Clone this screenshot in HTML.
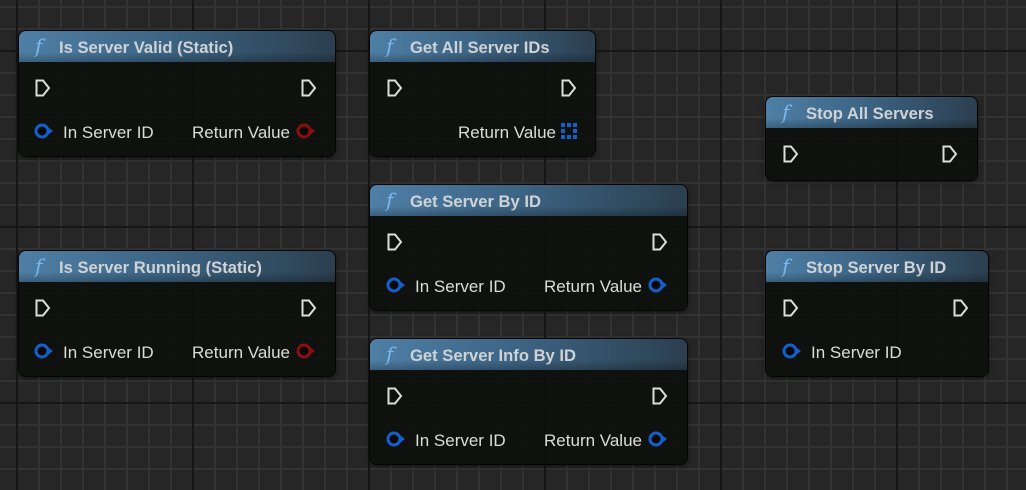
<!DOCTYPE html>
<html><head><meta charset="utf-8"><style>
html,body{margin:0;padding:0;}
body{width:1026px;height:490px;overflow:hidden;position:relative;font-family:"Liberation Sans",sans-serif;
background-color:#262626;
background-image:
linear-gradient(to right,#161616 2px,transparent 2px),
linear-gradient(to bottom,#161616 2px,transparent 2px),
linear-gradient(to right,#333 2px,transparent 2px),
linear-gradient(to bottom,#333 2px,transparent 2px);
background-size:176px 176px,176px 176px,22px 22px,22px 22px;
background-position:16px 0,0 50px,16px 0,0 6px;}
.n{position:absolute;border-radius:7px;background:rgba(14,16,14,0.93);box-shadow:0 0 0 1px #050505,0 2px 6px rgba(0,0,0,.6);overflow:hidden;}
.h{height:31px;background:linear-gradient(to right,#4f7fa6 0%,#3d6585 45%,#2b3f4f 100%);position:relative;}
.h:after{content:"";position:absolute;left:0;right:0;bottom:0;height:10px;background:linear-gradient(to bottom,rgba(0,0,0,0),rgba(0,0,0,.25));}
.f{position:absolute;left:16px;top:3px;color:#7ab8ee;font-family:"DejaVu Serif",serif;font-style:italic;font-size:20px;}
.t{position:absolute;left:40px;top:7px;color:#cfd3d6;font-weight:bold;font-size:16.6px;white-space:nowrap;}
.p{position:absolute;}
.tx{position:absolute;color:#dcdcdc;font-size:17px;white-space:nowrap;}
</style></head><body>

<!-- Is Server Valid -->
<div class="n" style="left:19px;top:31px;width:316px;height:125px;">
<div class="h"><span class="f">f</span><span class="t">Is Server Valid (Static)</span></div>
<svg class="p" style="left:16px;top:48px" width="16" height="18"><path d="M1.5 1.5H8L14 9L8 16.5H1.5Z" fill="none" stroke="#ddd" stroke-width="2"/></svg>
<svg class="p" style="left:282px;top:48px" width="16" height="18"><path d="M1.5 1.5H8L14 9L8 16.5H1.5Z" fill="none" stroke="#ddd" stroke-width="2"/></svg>
<svg class="p" style="left:15px;top:92px" width="20" height="16"><circle cx="8" cy="8" r="6" fill="#080808" stroke="#1160cc" stroke-width="3"/><path d="M15 5L19 8L15 11Z" fill="#1160cc"/></svg>
<span class="tx" style="left:44px;top:92px">In Server ID</span>
<span class="tx" style="right:45px;top:92px">Return Value</span>
<svg class="p" style="left:277px;top:92px" width="20" height="16"><circle cx="8" cy="8" r="6" fill="#080808" stroke="#8a0f0f" stroke-width="3"/><path d="M15 5L19 8L15 11Z" fill="#8a0f0f"/></svg>
</div>

<!-- Get All Server IDs -->
<div class="n" style="left:370px;top:31px;width:225px;height:125px;">
<div class="h"><span class="f">f</span><span class="t">Get All Server IDs</span></div>
<svg class="p" style="left:17px;top:48px" width="16" height="18"><path d="M1.5 1.5H8L14 9L8 16.5H1.5Z" fill="none" stroke="#ddd" stroke-width="2"/></svg>
<svg class="p" style="left:191px;top:48px" width="16" height="18"><path d="M1.5 1.5H8L14 9L8 16.5H1.5Z" fill="none" stroke="#ddd" stroke-width="2"/></svg>
<span class="tx" style="right:39px;top:92px">Return Value</span>
<svg class="p" style="left:191px;top:92px" width="17" height="16"><g fill="#1160cc"><rect x="0" y="0" width="4" height="4"/><rect x="6" y="0" width="4" height="4"/><rect x="12" y="0" width="4" height="4"/><rect x="0" y="6" width="4" height="4"/><rect x="12" y="6" width="4" height="4"/><rect x="0" y="12" width="4" height="4"/><rect x="6" y="12" width="4" height="4"/><rect x="12" y="12" width="4" height="4"/></g></svg>
</div>

<!-- Stop All Servers -->
<div class="n" style="left:766px;top:97px;width:211px;height:83px;">
<div class="h"><span class="f">f</span><span class="t">Stop All Servers</span></div>
<svg class="p" style="left:17px;top:48px" width="16" height="18"><path d="M1.5 1.5H8L14 9L8 16.5H1.5Z" fill="none" stroke="#ddd" stroke-width="2"/></svg>
<svg class="p" style="left:176px;top:48px" width="16" height="18"><path d="M1.5 1.5H8L14 9L8 16.5H1.5Z" fill="none" stroke="#ddd" stroke-width="2"/></svg>
</div>

<!-- Get Server By ID -->
<div class="n" style="left:370px;top:185px;width:317px;height:125px;">
<div class="h"><span class="f">f</span><span class="t">Get Server By ID</span></div>
<svg class="p" style="left:17px;top:48px" width="16" height="18"><path d="M1.5 1.5H8L14 9L8 16.5H1.5Z" fill="none" stroke="#ddd" stroke-width="2"/></svg>
<svg class="p" style="left:282px;top:48px" width="16" height="18"><path d="M1.5 1.5H8L14 9L8 16.5H1.5Z" fill="none" stroke="#ddd" stroke-width="2"/></svg>
<svg class="p" style="left:16px;top:92px" width="20" height="16"><circle cx="8" cy="8" r="6" fill="#080808" stroke="#1160cc" stroke-width="3"/><path d="M15 5L19 8L15 11Z" fill="#1160cc"/></svg>
<span class="tx" style="left:45px;top:92px">In Server ID</span>
<span class="tx" style="right:45px;top:92px">Return Value</span>
<svg class="p" style="left:278px;top:92px" width="20" height="16"><circle cx="8" cy="8" r="6" fill="#080808" stroke="#1160cc" stroke-width="3"/><path d="M15 5L19 8L15 11Z" fill="#1160cc"/></svg>
</div>

<!-- Is Server Running -->
<div class="n" style="left:19px;top:251px;width:316px;height:125px;">
<div class="h"><span class="f">f</span><span class="t">Is Server Running (Static)</span></div>
<svg class="p" style="left:16px;top:48px" width="16" height="18"><path d="M1.5 1.5H8L14 9L8 16.5H1.5Z" fill="none" stroke="#ddd" stroke-width="2"/></svg>
<svg class="p" style="left:282px;top:48px" width="16" height="18"><path d="M1.5 1.5H8L14 9L8 16.5H1.5Z" fill="none" stroke="#ddd" stroke-width="2"/></svg>
<svg class="p" style="left:15px;top:92px" width="20" height="16"><circle cx="8" cy="8" r="6" fill="#080808" stroke="#1160cc" stroke-width="3"/><path d="M15 5L19 8L15 11Z" fill="#1160cc"/></svg>
<span class="tx" style="left:44px;top:92px">In Server ID</span>
<span class="tx" style="right:45px;top:92px">Return Value</span>
<svg class="p" style="left:277px;top:92px" width="20" height="16"><circle cx="8" cy="8" r="6" fill="#080808" stroke="#8a0f0f" stroke-width="3"/><path d="M15 5L19 8L15 11Z" fill="#8a0f0f"/></svg>
</div>

<!-- Stop Server By ID -->
<div class="n" style="left:766px;top:251px;width:222px;height:125px;">
<div class="h"><span class="f">f</span><span class="t">Stop Server By ID</span></div>
<svg class="p" style="left:17px;top:48px" width="16" height="18"><path d="M1.5 1.5H8L14 9L8 16.5H1.5Z" fill="none" stroke="#ddd" stroke-width="2"/></svg>
<svg class="p" style="left:187px;top:48px" width="16" height="18"><path d="M1.5 1.5H8L14 9L8 16.5H1.5Z" fill="none" stroke="#ddd" stroke-width="2"/></svg>
<svg class="p" style="left:16px;top:92px" width="20" height="16"><circle cx="8" cy="8" r="6" fill="#080808" stroke="#1160cc" stroke-width="3"/><path d="M15 5L19 8L15 11Z" fill="#1160cc"/></svg>
<span class="tx" style="left:45px;top:92px">In Server ID</span>
</div>

<!-- Get Server Info By ID -->
<div class="n" style="left:370px;top:339px;width:317px;height:125px;">
<div class="h"><span class="f">f</span><span class="t">Get Server Info By ID</span></div>
<svg class="p" style="left:17px;top:48px" width="16" height="18"><path d="M1.5 1.5H8L14 9L8 16.5H1.5Z" fill="none" stroke="#ddd" stroke-width="2"/></svg>
<svg class="p" style="left:282px;top:48px" width="16" height="18"><path d="M1.5 1.5H8L14 9L8 16.5H1.5Z" fill="none" stroke="#ddd" stroke-width="2"/></svg>
<svg class="p" style="left:16px;top:92px" width="20" height="16"><circle cx="8" cy="8" r="6" fill="#080808" stroke="#1160cc" stroke-width="3"/><path d="M15 5L19 8L15 11Z" fill="#1160cc"/></svg>
<span class="tx" style="left:45px;top:92px">In Server ID</span>
<span class="tx" style="right:45px;top:92px">Return Value</span>
<svg class="p" style="left:278px;top:92px" width="20" height="16"><circle cx="8" cy="8" r="6" fill="#080808" stroke="#1160cc" stroke-width="3"/><path d="M15 5L19 8L15 11Z" fill="#1160cc"/></svg>
</div>

</body></html>
